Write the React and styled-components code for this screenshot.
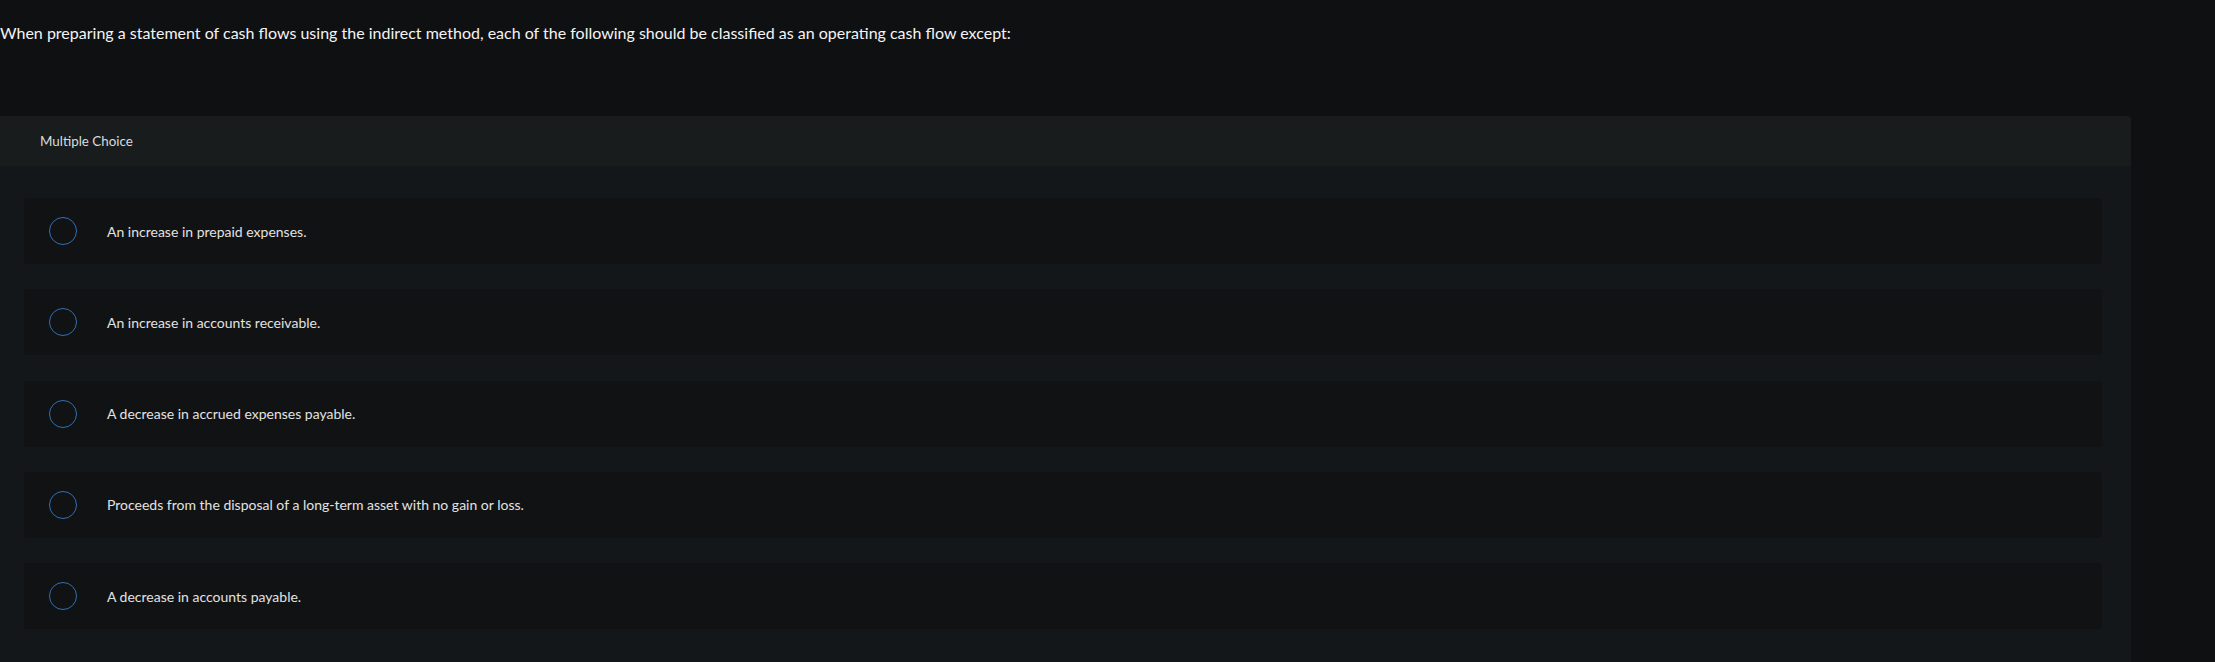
import React from "react"
import styled, { createGlobalStyle } from "styled-components"

const GlobalStyle = createGlobalStyle`
  html, body {
    margin: 0;
    padding: 0;
    background: #0f1012;
    font-family: Lato, "Noto Sans", "Liberation Sans", sans-serif;
  }
`

const Page = styled.div`
  width: 2215px;
  height: 662px;
  overflow: hidden;
`

const Question = styled.p`
  margin: 0;
  padding: 23px 0 0 0;
  height: 116px;
  box-sizing: border-box;
  font-size: 16px;
  line-height: 20px;
  color: #f4f4f4;
`

const Panel = styled.section`
  width: 2131px;
  background-color: #13171a;
  border-radius: 0 4px 0 0;
  min-height: 546px;
`

const PanelHeader = styled.div`
  height: 50px;
  display: flex;
  align-items: center;
  padding-left: 40px;
  background-color: #181c1d;
  border-radius: 0 4px 0 0;
  font-size: 13.4px;
  color: #d9dcdd;
`

const OptionList = styled.div`
  display: flex;
  flex-direction: column;
  gap: 25.3px;
  padding: 32px 29px 0 24px;
`

const Option = styled.label`
  display: flex;
  align-items: center;
  height: 66px;
  padding-left: 25px;
  background-color: #111214;
  border-radius: 4px;
  cursor: pointer;
`

const Radio = styled.span`
  width: 28px;
  height: 28px;
  box-sizing: border-box;
  border: 1.6px solid #2f70b2;
  border-radius: 50%;
  flex-shrink: 0;
  margin-right: 30px;
`

const OptionText = styled.span`
  font-size: 14px;
  color: #e2e2e2;
`

const options = [
  "An increase in prepaid expenses.",
  "An increase in accounts receivable.",
  "A decrease in accrued expenses payable.",
  "Proceeds from the disposal of a long-term asset with no gain or loss.",
  "A decrease in accounts payable.",
]

export default function App() {
  return (
    <Page>
      <GlobalStyle />
      <Question>
        When preparing a statement of cash flows using the indirect method, each of the following should be classified as an operating cash flow except:
      </Question>
      <Panel>
        <PanelHeader>Multiple Choice</PanelHeader>
        <OptionList>
          {options.map((text) => (
            <Option key={text}>
              <Radio />
              <OptionText>{text}</OptionText>
            </Option>
          ))}
        </OptionList>
      </Panel>
    </Page>
  )
}
